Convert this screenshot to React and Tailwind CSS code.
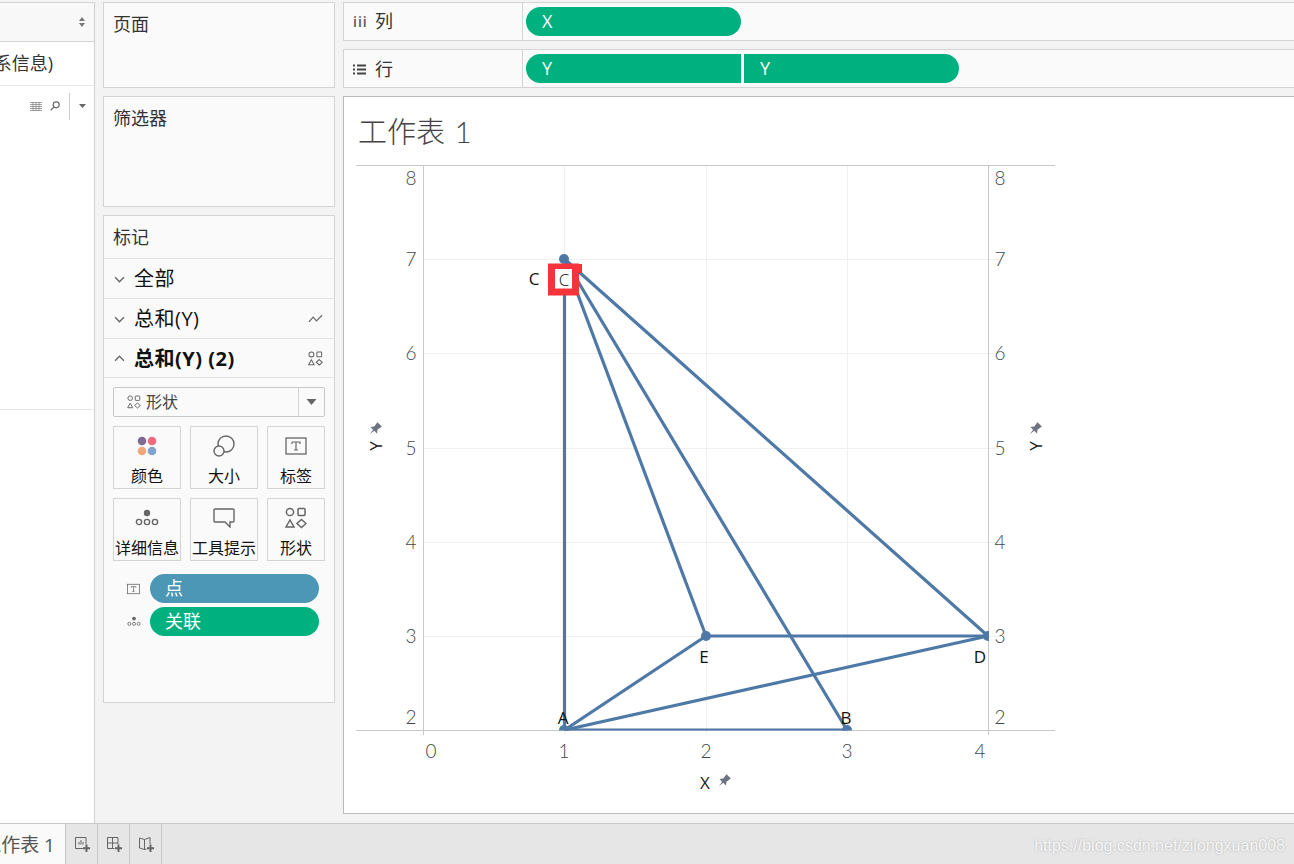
import React from 'react';

const FONT = '"Open Sans", "Noto Sans CJK SC", sans-serif';
const LIGHT_FONT = 'Lato, "Noto Sans CJK SC", sans-serif';

function ShapesIcon({ className }) {
    return (
        <svg viewBox="0 0 22 22" className={className} fill="none" stroke="currentColor" strokeWidth="1.5">
            <circle cx="5" cy="5" r="3.6" />
            <rect x="13" y="1.5" width="7" height="7" rx="1" />
            <path d="M5 13 L9 20 H1 Z" />
            <path d="M16.5 12.5 L21 16.5 L16.5 20.5 L12 16.5 Z" />
        </svg>
    );
}

function DetailIcon({ className }) {
    return (
        <svg viewBox="0 0 24 18" className={className} fill="none" stroke="currentColor" strokeWidth="1.4">
            <circle cx="12" cy="4" r="3.2" fill="currentColor" stroke="none" />
            <circle cx="4" cy="13" r="2.6" />
            <circle cx="12" cy="13" r="2.6" />
            <circle cx="20" cy="13" r="2.6" />
        </svg>
    );
}

function LabelIcon({ className }) {
    return (
        <svg viewBox="0 0 22 18" className={className} fill="none" stroke="currentColor" strokeWidth="1.3">
            <rect x="1" y="1" width="20" height="16" />
            <path d="M7 5 H15 V7 M7 5 V7 M11 5 V13 M9 13 H13" strokeWidth="1.2" />
        </svg>
    );
}

function MarkButton({ label, children }) {
    return (
        <div className="h-[63px] border border-[#d4d4d4] flex flex-col items-center">
            <div className="h-[37px] flex items-center justify-center text-[#666]">{children}</div>
            <span className="text-[16px] leading-[24px] text-[#111] whitespace-nowrap">{label}</span>
        </div>
    );
}

function MarkRow({ title, bold, chevron, className, children }) {
    return (
        <div className={`flex items-center border-t border-[#e3e3e3] pl-[10px] pr-[11px] shrink-0 ${className}`}>
            <svg viewBox="0 0 10 6" className="w-[11px] h-[7px] text-[#666] mr-[9px]" fill="none" stroke="currentColor" strokeWidth="1.2">
                <path d={chevron === 'up' ? 'M1 5 L5 1 L9 5' : 'M1 1 L5 5 L9 1'} />
            </svg>
            <span className={`text-[20px] tracking-[0.5px] text-[#111] flex-1 ${bold ? 'font-bold' : ''}`}>{title}</span>
            {children}
        </div>
    );
}

function PlusTabIcon({ children }) {
    return (
        <div className="w-[32px] border-r border-[#c8c8c8] flex items-center justify-center">
            <svg viewBox="0 0 18 18" className="w-[18px] h-[18px] text-[#666]" fill="none" stroke="currentColor" strokeWidth="1">
                {children}
                <path d="M13.5 9.5 V17 M10 13.2 H17" strokeWidth="2" />
            </svg>
        </div>
    );
}

function Pin({ x, y }) {
    return (
        <g transform={`translate(${x} ${y}) rotate(45) scale(1.2)`} fill="#6b7480">
            <path d="M-2.6 -5.5 H2.6 L1.8 -1 L4 1.5 H0.7 L0 6 L-0.7 1.5 H-4 L-1.8 -1 Z" />
        </g>
    );
}

const X_TICKS = [[431, '0'], [564, '1'], [706, '2'], [847, '3'], [980, '4']];
const Y_TICKS = [[178, '8'], [259, '7'], [353, '6'], [448, '5'], [542, '4'], [636, '3'], [717, '2']];
const LINES = [
    [564.5, 259, 564.5, 730],
    [564.5, 259, 706, 636],
    [564.5, 259, 847, 730],
    [564.5, 259, 988, 636],
    [706, 636, 988, 636],
    [564.5, 730, 706, 636],
    [564.5, 730, 988, 636],
    [564.5, 730, 847, 730],
];

function Chart() {
    return (
        <svg viewBox="344 165 950 648" className="w-[950px] h-[648px] block" style={{ fontFamily: FONT }}>
            <defs>
                <clipPath id="plot">
                    <rect x="423" y="165" width="566" height="565.5" />
                </clipPath>
            </defs>
            {[259, 353, 448, 542, 636].map((y) => (
                <line key={y} x1="423" x2="1000" y1={y + 0.5} y2={y + 0.5} stroke="#f0f0f0" />
            ))}
            {[564, 706, 847].map((x) => (
                <line key={x} x1={x + 0.5} x2={x + 0.5} y1="165" y2="735" stroke="#f0f0f0" />
            ))}
            <line x1="356" x2="1055" y1="165.5" y2="165.5" stroke="#c8c8c8" />
            <line x1="356" x2="1055" y1="730.5" y2="730.5" stroke="#c8c8c8" />
            <line x1="423.5" x2="423.5" y1="165" y2="735" stroke="#c8c8c8" />
            <line x1="988.5" x2="988.5" y1="165" y2="735" stroke="#c8c8c8" />

            <g clipPath="url(#plot)">
                {LINES.map(([x1, y1, x2, y2], i) => (
                    <line key={i} x1={x1} y1={y1} x2={x2} y2={y2} stroke="#4e79a7" strokeWidth="3.2" />
                ))}
                <circle cx="564" cy="259" r="5" fill="#4e79a7" />
                <circle cx="706" cy="636" r="5" fill="#4e79a7" />
                <circle cx="988" cy="636" r="5" fill="#4e79a7" />
                <circle cx="564" cy="730" r="5" fill="#4e79a7" />
                <circle cx="847" cy="730" r="5" fill="#4e79a7" />
            </g>

            <g style={{ fontFamily: LIGHT_FONT }} fontSize="19" fontWeight="300" fill="#44474b">
                {Y_TICKS.map(([y, t]) => (
                    <text key={y} x="411" y={y + 7} textAnchor="middle">{t}</text>
                ))}
                {Y_TICKS.map(([y, t]) => (
                    <text key={y} x="1000" y={y + 7} textAnchor="middle">{t}</text>
                ))}
                {X_TICKS.map(([x, t]) => (
                    <text key={x} x={x} y="758" textAnchor="middle">{t}</text>
                ))}
            </g>

            <rect x="551.5" y="267" width="24" height="25" fill="#fff" stroke="#f5333a" strokeWidth="7" />
            <rect x="572" y="264" width="10" height="9" fill="#f5333a" />
            <rect x="555" y="269" width="17" height="19" fill="#fff" />

            <g fontSize="17" fill="#111">
                <text x="534" y="285" textAnchor="middle">C</text>
                <text x="564" y="286" textAnchor="middle" fontWeight="300">C</text>
                <text x="704" y="663" textAnchor="middle">E</text>
                <text x="980" y="663" textAnchor="middle">D</text>
                <text x="563" y="724" textAnchor="middle">A</text>
                <text x="846" y="724" textAnchor="middle">B</text>
            </g>

            <text x="705" y="789" textAnchor="middle" fontSize="17" fill="#222">X</text>
            <Pin x={724} y={781} />
            <text transform="translate(382 446) rotate(-90)" textAnchor="middle" fontSize="17" fill="#222">Y</text>
            <Pin x={375} y={429} />
            <text transform="translate(1042 446) rotate(-90)" textAnchor="middle" fontSize="17" fill="#222">Y</text>
            <Pin x={1035} y={429} />
        </svg>
    );
}

export default function App() {
    return (
        <div className="w-[1294px] h-[864px] overflow-hidden flex flex-col bg-[#f3f3f3] text-[#333]" style={{ fontFamily: FONT }}>
            <div className="h-[823px] flex pt-[2px] shrink-0">
                {/* data pane */}
                <div className="w-[95px] shrink-0 bg-white border-r border-[#d0d0d0] flex flex-col">
                    <div className="h-[40px] bg-[#f8f8f8] border-y border-[#d4d4d4] flex items-center justify-end pr-[9px] shrink-0">
                        <svg viewBox="0 0 6 10" className="w-[6px] h-[10px]" fill="#777">
                            <path d="M3 0 L6 4 H0 Z M3 10 L0 6 H6 Z" />
                        </svg>
                    </div>
                    <div className="h-[44px] border-b border-[#e6e6e6] flex items-center justify-end pr-[41px] overflow-hidden shrink-0">
                        <span className="text-[18px] text-[#333] whitespace-nowrap">系信息)</span>
                    </div>
                    <div className="h-[324px] border-b border-[#e6e6e6] shrink-0">
                        <div className="flex items-center h-[28px] mt-[6px] justify-end pr-[8px]">
                            <svg viewBox="0 0 12 9" className="w-[12px] h-[9px] mr-[8px]" stroke="#888" strokeWidth="0.8" fill="none">
                                <path d="M0 .5 H12 M0 2.5 H12 M0 4.5 H12 M0 6.5 H12 M0 8.5 H12 M3 0 V9 M6 0 V9 M9 0 V9" />
                            </svg>
                            <svg viewBox="0 0 10 10" className="w-[10px] h-[10px] mr-[9px]" stroke="#666" strokeWidth="1.2" fill="none">
                                <circle cx="6.2" cy="3.8" r="3" />
                                <path d="M4 6 L.6 9.4" />
                            </svg>
                            <div className="w-px h-[27px] bg-[#ccc] mr-[9px]" />
                            <svg viewBox="0 0 7 4" className="w-[7px] h-[4px]" fill="#666">
                                <path d="M0 0 H7 L3.5 4 Z" />
                            </svg>
                        </div>
                    </div>
                </div>

                {/* cards */}
                <div className="w-[232px] shrink-0 ml-[8px] flex flex-col">
                    <div className="h-[86px] bg-[#fafafa] border border-[#d4d4d4] pl-[9px] pt-[8px] text-[18px] leading-[26px] shrink-0">页面</div>
                    <div className="h-[111px] mt-[8px] bg-[#fafafa] border border-[#d4d4d4] pl-[9px] pt-[8px] text-[18px] leading-[26px] shrink-0">筛选器</div>
                    <div className="h-[488px] mt-[8px] bg-[#fafafa] border border-[#d4d4d4] flex flex-col shrink-0">
                        <div className="h-[42px] pl-[9px] pt-[8px] text-[18px] leading-[26px] shrink-0">标记</div>
                        <MarkRow title="全部" chevron="down" className="h-[40px] pt-[1px]" />
                        <MarkRow title="总和(Y)" chevron="down" className="h-[40px] pt-[1px]">
                            <svg viewBox="0 0 16 10" className="w-[15px] h-[10px] text-[#666]" fill="none" stroke="currentColor" strokeWidth="1.3">
                                <path d="M1 8 L5.5 3 L9 7 L15 1" />
                            </svg>
                        </MarkRow>
                        <MarkRow title="总和(Y) (2)" bold chevron="up" className="h-[39px] pt-[1px]">
                            <ShapesIcon className="w-[15px] h-[15px] text-[#666]" />
                        </MarkRow>

                        <div className="border-t border-[#e3e3e3] px-[9px] pt-[9px]">
                            <div className="h-[30px] bg-[#fafafa] border border-[#c8c8c8] rounded-[2px] flex items-center">
                                <ShapesIcon className="w-[14px] h-[14px] text-[#666] ml-[13px] mr-[5px]" />
                                <span className="text-[16px] text-[#444] flex-1">形状</span>
                                <div className="w-[26px] h-full border-l border-[#d4d4d4] flex items-center justify-center">
                                    <svg viewBox="0 0 10 6" className="w-[11px] h-[6px]" fill="#666">
                                        <path d="M0 0 H10 L5 6 Z" />
                                    </svg>
                                </div>
                            </div>
                            <div className="grid grid-cols-[68px_68px_58px] gap-x-[9px] gap-y-[9px] mt-[9px]">
                                <MarkButton label="颜色">
                                    <svg viewBox="0 0 20 20" className="w-[20px] h-[20px]">
                                        <circle cx="5" cy="5" r="4.3" fill="#7d6b95" />
                                        <circle cx="15" cy="5" r="4.3" fill="#f0697f" />
                                        <circle cx="5" cy="15" r="4.3" fill="#f3a67a" />
                                        <circle cx="15" cy="15" r="4.3" fill="#7fa5cf" />
                                    </svg>
                                </MarkButton>
                                <MarkButton label="大小">
                                    <svg viewBox="0 0 22 22" className="w-[22px] h-[22px]" fill="none" stroke="currentColor" strokeWidth="1.4">
                                        <circle cx="13" cy="9" r="8" />
                                        <circle cx="6" cy="16" r="5" fill="#fafafa" />
                                    </svg>
                                </MarkButton>
                                <MarkButton label="标签">
                                    <LabelIcon className="w-[22px] h-[18px]" />
                                </MarkButton>
                                <MarkButton label="详细信息">
                                    <DetailIcon className="w-[24px] h-[18px]" />
                                </MarkButton>
                                <MarkButton label="工具提示">
                                    <svg viewBox="0 0 22 20" className="w-[22px] h-[20px]" fill="none" stroke="currentColor" strokeWidth="1.4">
                                        <path d="M2 1 H20 Q21 1 21 2 V13 Q21 14 20 14 H17 V19 L12 14 H2 Q1 14 1 13 V2 Q1 1 2 1 Z" />
                                    </svg>
                                </MarkButton>
                                <MarkButton label="形状">
                                    <ShapesIcon className="w-[22px] h-[22px]" />
                                </MarkButton>
                            </div>
                            <div className="mt-[13px] flex flex-col gap-[4px]">
                                <div className="flex items-center">
                                    <LabelIcon className="w-[13px] h-[12px] ml-[14px] mr-[10px] text-[#666]" />
                                    <div className="w-[169px] h-[29px] rounded-full bg-[#4b97b5] text-white text-[18px] leading-[29px] pl-[15px]">点</div>
                                </div>
                                <div className="flex items-center">
                                    <DetailIcon className="w-[14px] h-[11px] ml-[14px] mr-[9px] text-[#666]" />
                                    <div className="w-[169px] h-[29px] rounded-full bg-[#00b180] text-white text-[18px] leading-[29px] pl-[15px]">关联</div>
                                </div>
                            </div>
                        </div>
                    </div>
                </div>

                {/* shelves and view */}
                <div className="w-[951px] shrink-0 ml-[8px] flex flex-col">
                    <div className="h-[39px] flex bg-[#fafafa] border-y border-l border-[#d4d4d4] shrink-0">
                        <div className="w-[179px] border-r border-[#d4d4d4] flex items-center pl-[9px]">
                            <span className="text-[14px] tracking-[1px] font-semibold text-[#555] w-[22px]">iii</span>
                            <span className="text-[18px]">列</span>
                        </div>
                        <div className="flex items-center pl-[3px]">
                            <div className="w-[215px] h-[29px] rounded-full bg-[#00b180] text-white text-[18px] leading-[29px] pl-[16px]">X</div>
                        </div>
                    </div>
                    <div className="h-[39px] mt-[8px] flex bg-[#fafafa] border-y border-l border-[#d4d4d4] shrink-0">
                        <div className="w-[179px] border-r border-[#d4d4d4] flex items-center pl-[9px] pt-[1px]">
                            <svg viewBox="0 0 13 11" className="w-[13px] h-[11px] mr-[9px]" stroke="#444" strokeWidth="2" fill="none">
                                <path d="M0 1.5 H2 M4 1.5 H13 M0 5.5 H2 M4 5.5 H13 M0 9.5 H2 M4 9.5 H13" />
                            </svg>
                            <span className="text-[18px]">行</span>
                        </div>
                        <div className="flex items-center pl-[3px] gap-[3px]">
                            <div className="w-[215px] h-[29px] rounded-l-full bg-[#00b180] text-white text-[18px] leading-[29px] pl-[16px]">Y</div>
                            <div className="w-[215px] h-[29px] rounded-r-full bg-[#00b180] text-white text-[18px] leading-[29px] pl-[16px]">Y</div>
                        </div>
                    </div>
                    <div className="h-[718px] mt-[8px] bg-white border-y border-l border-[#bbb] flex flex-col shrink-0">
                        <div className="h-[68px] pl-[14px] pt-[15px] text-[29px] leading-[40px] font-light text-[#444] shrink-0 [word-spacing:2px]" style={{ fontFamily: LIGHT_FONT }}>工作表 1</div>
                        <Chart />
                    </div>
                </div>
            </div>

            {/* tab bar */}
            <div className="flex-1 flex bg-[#e6e6e6] border-t border-[#c8c8c8]">
                <div className="w-[66px] bg-[#fafafa] border-r border-[#c8c8c8] flex items-center justify-end pr-[10px] pt-[3px] overflow-hidden">
                    <span className="text-[19px] text-[#555] whitespace-nowrap">工作表 1</span>
                </div>
                <PlusTabIcon>
                    <path d="M10 13.5 H2.5 V2.5 H13 V9" />
                    <path d="M6 9.5 V7 M8 9.5 V5 M10 9.5 V7" />
                </PlusTabIcon>
                <PlusTabIcon>
                    <path d="M9.5 13.5 H2.5 V2.5 H13 V9 M2.5 8 H13 M7.5 2.5 V13" />
                </PlusTabIcon>
                <PlusTabIcon>
                    <path d="M2.5 3 L7.5 4.5 L13 2.5 V9 M2.5 3 V13 L7.5 14.5 L9.5 14 M7.5 4.5 V14.5" />
                </PlusTabIcon>
                <div className="flex-1 flex items-center justify-end pr-[9px] pt-[3px]">
                    <span className="text-[16px] text-[#f6f6f6] whitespace-nowrap [text-shadow:0_0_2px_#aaaaaa]" style={{ fontFamily: '"Liberation Sans", sans-serif' }}>https://blog.csdn.net/zilongxuan008</span>
                </div>
            </div>
        </div>
    );
}
